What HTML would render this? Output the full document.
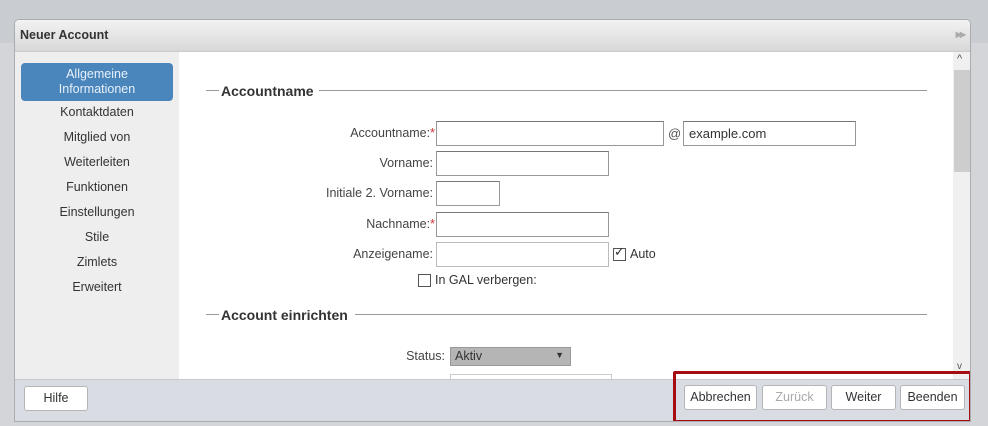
<!DOCTYPE html>
<html><head><meta charset="utf-8"><style>
*{box-sizing:border-box;margin:0;padding:0}
body{width:988px;height:426px;background:#d3d5d8;font-family:"Liberation Sans",sans-serif;font-size:12px;color:#333;position:relative;overflow:hidden}
.a{position:absolute}
.topband{left:0;top:0;width:988px;height:43px;background:#c9cdd1}
.dlg{left:14px;top:19px;width:957px;height:403px;border:1px solid #a9adb2;border-radius:5px 5px 0 0;background:#fff;overflow:hidden}
.hdr{left:0;top:0;width:957px;height:32px;background:linear-gradient(#f2f2f2,#d8d8d8);border-bottom:1px solid #ccc;font-weight:bold;font-size:12.5px;color:#333;padding:8px 5px}
.side{left:0;top:32px;width:164px;height:330px;background:#eeeeee}
.sel{left:6px;top:43px;width:152px;height:38px;background:#4a86bc;border-radius:4px;color:#e8f0f8;text-align:center;font-size:12.5px;line-height:15px;padding-top:4px}
.nav{left:0;width:164px;text-align:center;font-size:12.5px;color:#333}
.lg{font-weight:bold;font-size:14px;color:#333}
.line{height:1px;background:#999}
.lbl{text-align:right;font-size:12.5px;color:#444}
.inp{border:1px solid #999;border-top-color:#777;background:#fff;height:25px}
.star{color:#c33}
.foot{left:0;top:359px;width:957px;height:44px;background:#d9dde3;border-top:1px solid #c5c9cf}
.btn{border:1px solid #b5b5b5;border-radius:3px;background:#fff;text-align:center;font-size:12.5px;line-height:23px;height:25px;color:#333}
.cb{width:13px;height:13px;border:1px solid #555;background:#fff}
</style></head><body>
<div class="a topband"></div>
<div class="a dlg">
 <div class="a hdr">Neuer Account<span style="position:absolute;right:8px;top:10px;font-size:8px;color:#aaa;letter-spacing:-2px">▶▶</span></div>
 <div class="a side"></div>
 <div class="a sel">Allgemeine<br>Informationen</div>
 <div class="a nav" style="top:85px">Kontaktdaten</div>
 <div class="a nav" style="top:110px">Mitglied von</div>
 <div class="a nav" style="top:135px">Weiterleiten</div>
 <div class="a nav" style="top:160px">Funktionen</div>
 <div class="a nav" style="top:185px">Einstellungen</div>
 <div class="a nav" style="top:210px">Stile</div>
 <div class="a nav" style="top:235px">Zimlets</div>
 <div class="a nav" style="top:260px">Erweitert</div>
 <!-- scrollbar -->
 <div class="a" style="left:938px;top:32px;width:18px;height:330px;background:#f0f0f0"></div>
 <div class="a" style="left:939px;top:50px;width:16px;height:102px;background:#cdcdcd"></div>
 <div class="a" style="left:942px;top:33px;font-size:11px;color:#555">^</div>
 <div class="a" style="left:942px;top:341px;font-size:10px;color:#555">v</div>
 <!-- section 1 -->
 <div class="a line" style="left:191px;top:70px;width:13px"></div>
 <div class="a lg" style="left:206px;top:63px">Accountname</div>
 <div class="a line" style="left:304px;top:70px;width:608px"></div>
 <div class="a lbl" style="left:240px;top:106px;width:180px">Accountname:<span class="star">*</span></div>
 <div class="a inp" style="left:421px;top:101px;width:228px"></div>
 <div class="a" style="left:653px;top:106px;font-size:13px;color:#555">@</div>
 <div class="a inp" style="left:668px;top:101px;width:173px;font-size:13px;padding:4px 5px">example.com</div>
 <div class="a lbl" style="left:240px;top:136px;width:178px">Vorname:</div>
 <div class="a inp" style="left:421px;top:131px;width:173px"></div>
 <div class="a lbl" style="left:240px;top:166px;width:178px">Initiale 2. Vorname:</div>
 <div class="a inp" style="left:421px;top:161px;width:64px"></div>
 <div class="a lbl" style="left:240px;top:197px;width:180px">Nachname:<span class="star">*</span></div>
 <div class="a inp" style="left:421px;top:192px;width:173px"></div>
 <div class="a lbl" style="left:240px;top:227px;width:178px">Anzeigename:</div>
 <div class="a inp" style="left:421px;top:222px;width:173px;border-color:#bbb"></div>
 <div class="a cb" style="left:598px;top:228px"></div>
 <div class="a" style="left:599px;top:224px;font-size:13px;color:#333">✓</div>
 <div class="a" style="left:615px;top:227px;font-size:12.5px">Auto</div>
 <div class="a cb" style="left:403px;top:254px"></div>
 <div class="a" style="left:420px;top:253px;font-size:12.5px">In GAL verbergen:</div>
 <!-- section 2 -->
 <div class="a line" style="left:191px;top:294px;width:13px"></div>
 <div class="a lg" style="left:206px;top:287px">Account einrichten</div>
 <div class="a line" style="left:340px;top:294px;width:572px"></div>
 <div class="a lbl" style="left:240px;top:329px;width:190px">Status:</div>
 <div class="a" style="left:435px;top:327px;width:121px;height:19px;background:#b5b5b5;border:1px solid #999;font-size:12.5px;padding:1px 4px">Aktiv<span style="position:absolute;right:6px;top:2px;font-size:9px">▼</span></div>
 <div class="a inp" style="left:435px;top:354px;width:162px;border-color:#ccc"></div>
 <!-- footer -->
 <div class="a foot"></div>
 <div class="a btn" style="left:9px;top:366px;width:64px">Hilfe</div>
 <div class="a" style="left:658px;top:351px;width:299px;height:52px;border:3px solid #a50d12;border-radius:2px"></div>
 <div class="a btn" style="left:669px;top:365px;width:73px">Abbrechen</div>
 <div class="a btn" style="left:747px;top:365px;width:65px;color:#aaa">Zurück</div>
 <div class="a btn" style="left:816px;top:365px;width:65px">Weiter</div>
 <div class="a btn" style="left:885px;top:365px;width:65px">Beenden</div>
</div>
</body></html>
